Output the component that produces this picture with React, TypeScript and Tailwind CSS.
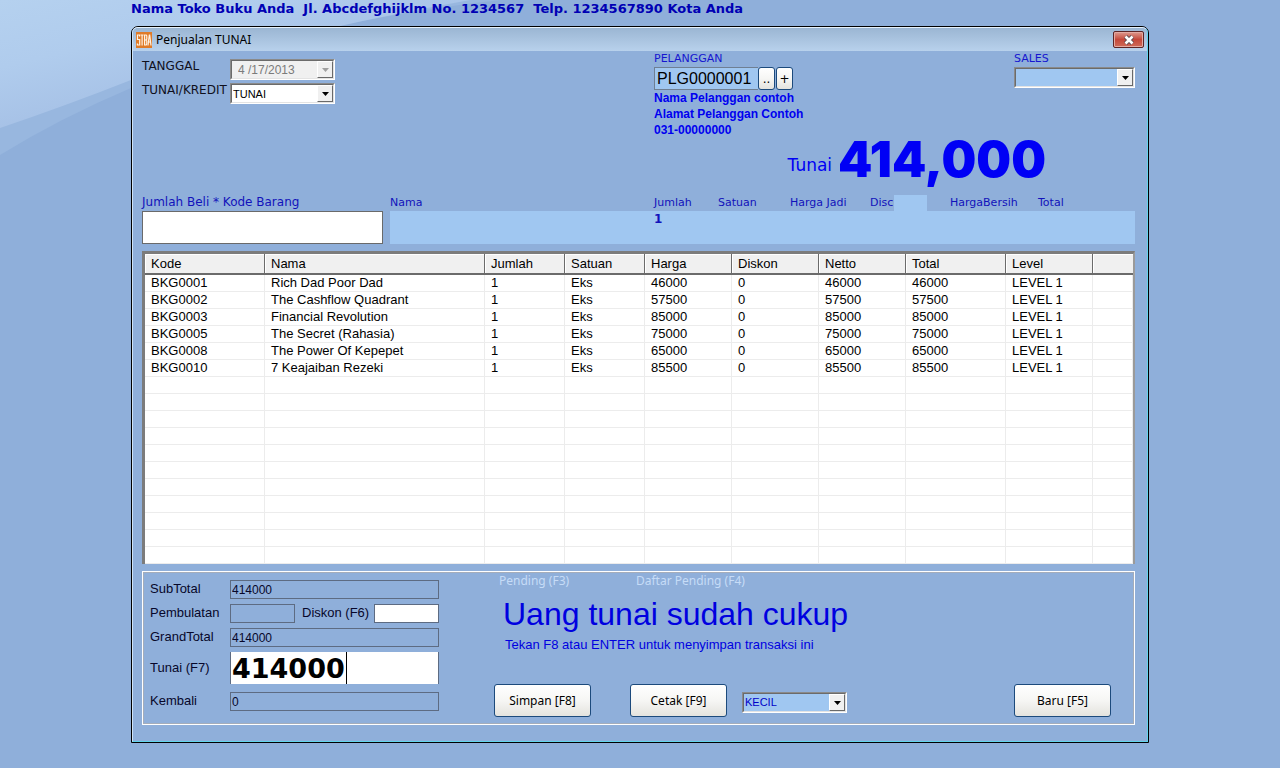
import type { ReactNode } from 'react'

const COLUMNS = [
  { name: 'Kode', width: 'w-[120px]' },
  { name: 'Nama', width: 'w-[220px]' },
  { name: 'Jumlah', width: 'w-20' },
  { name: 'Satuan', width: 'w-20' },
  { name: 'Harga', width: 'w-[87px]' },
  { name: 'Diskon', width: 'w-[87px]' },
  { name: 'Netto', width: 'w-[87px]' },
  { name: 'Total', width: 'w-[100px]' },
  { name: 'Level', width: 'w-[87px]' },
  { name: '', width: '' },
]

const ITEMS = [
  ['BKG0001', 'Rich Dad Poor Dad', '1', 'Eks', '46000', '0', '46000', '46000', 'LEVEL 1'],
  ['BKG0002', 'The Cashflow Quadrant', '1', 'Eks', '57500', '0', '57500', '57500', 'LEVEL 1'],
  ['BKG0003', 'Financial Revolution', '1', 'Eks', '85000', '0', '85000', '85000', 'LEVEL 1'],
  ['BKG0005', 'The Secret (Rahasia)', '1', 'Eks', '75000', '0', '75000', '75000', 'LEVEL 1'],
  ['BKG0008', 'The Power Of Kepepet', '1', 'Eks', '65000', '0', '65000', '65000', 'LEVEL 1'],
  ['BKG0010', '7 Keajaiban Rezeki', '1', 'Eks', '85500', '0', '85500', '85500', 'LEVEL 1'],
]

const VISIBLE_ROWS = 17

function Wallpaper() {
  return (
    <svg className="absolute top-0 left-0 w-[520px] h-[170px]" viewBox="0 0 520 170" aria-hidden="true">
      <defs>
        <linearGradient id="sky" gradientUnits="userSpaceOnUse" x1="0" y1="0" x2="30" y2="128">
          <stop offset="0" stopColor="#b5d1ef" />
          <stop offset="0.5" stopColor="#b0cced" />
          <stop offset="1" stopColor="#a6c1e6" />
        </linearGradient>
      </defs>
      <path d="M0 155 Q60 118 131 88 Q300 22 500 0 L0 0Z" fill="#98b7df" />
      <path d="M0 128 Q65 106 131 80 Q300 30 470 0 L0 0Z" fill="url(#sky)" />
    </svg>
  )
}

function DropBox({ className, disabled, children }: { className: string; disabled?: boolean; children: ReactNode }) {
  return (
    <div className={`relative h-[21px] border border-t-[#8a8a8a] border-l-[#8a8a8a] border-r-white border-b-white ${className}`}>
      <div className="h-full border border-t-[#6b6b6b] border-l-[#6b6b6b] border-r-[#e3e3e3] border-b-[#e3e3e3]">{children}</div>
      <span className="pointer-events-none absolute top-px right-px bottom-px w-4 flex items-center justify-center bg-[#f0f0f0] border border-t-white border-l-white border-r-[#696969] border-b-[#696969]">
        <svg width="7" height="4" viewBox="0 0 7 4" className={disabled ? 'fill-[#a0a0a0]' : 'fill-black'} aria-hidden="true">
          <path d="M0 0h7L3.5 4z" />
        </svg>
      </span>
    </div>
  )
}

function PushButton({ className, children }: { className: string; children: ReactNode }) {
  return (
    <button
      type="button"
      className={`border border-[#1c4a7c] rounded-[3px] bg-linear-to-b from-white via-[#f6f6f4] to-[#e4e3de] text-black ${className}`}
    >
      {children}
    </button>
  )
}

function TitleBar() {
  return (
    <div className="h-[23px] pl-[3px] pr-[3px] flex items-center rounded-t-[5px] bg-linear-to-b from-[#9bb6d3] to-[#b8d1ec]">
      <svg width="16" height="16" viewBox="0 0 16 16" aria-hidden="true">
        <rect width="16" height="16" fill="#e07b28" />
        <g fill="none" stroke="#fff3e4" strokeWidth="1.2">
          <path d="M3.6 4.5V3H1.5v4.5h2.2V13H1.4v-1.6" />
          <path d="M4.6 3h3M6.1 3v10.5" />
          <path d="M8.6 3V13h1.6l.6-1V9l-.8-1 .8-1V4l-.6-1zM8.6 8h1.6" />
          <path d="M12 13.5L13.3 3h.4L15 13.5M12.4 10h2.2" />
        </g>
      </svg>
      <h2 className="ml-1 flex-1 font-['Noto_Sans'] text-xs text-black">Penjualan TUNAI</h2>
      <button
        type="button"
        aria-label="Tutup"
        className="w-[31px] h-[17px] flex items-center justify-center rounded-[2px] border border-[#5c2425] bg-linear-to-b from-[#dc9a90] via-[#c4473a] to-[#cf6a58] shadow-[inset_0_0_0_1px_#e3aaa2]"
      >
        <svg width="12" height="10" viewBox="0 0 12 10" aria-hidden="true">
          <path d="M2.5 1.5l7 7M9.5 1.5l-7 7" stroke="#5a4a50" strokeWidth="4.4" />
          <path d="M2.5 1.5l7 7M9.5 1.5l-7 7" stroke="#fff" strokeWidth="2.6" />
        </svg>
      </button>
    </div>
  )
}

function TransactionHeader() {
  return (
    <div className="flex h-[88px] text-[11px] leading-4">
      <div className="w-[512px] shrink-0 pt-2 text-xs/[14px] text-[#10101c]">
        <div className="flex h-6">
          <label htmlFor="tanggal" className="w-[88px]">TANGGAL</label>
          <DropBox className="w-[105px]" disabled>
            <input
              id="tanggal"
              disabled
              defaultValue="4 /17/2013"
              className="block w-full h-full pl-[6px] bg-[#f0f0f0] font-['Liberation_Sans'] text-xs text-[#7b7b7b]"
            />
          </DropBox>
        </div>
        <div className="flex h-6">
          <label htmlFor="jenis" className="w-[88px]">TUNAI/KREDIT</label>
          <DropBox className="w-[105px]">
            <select id="jenis" className="block w-full h-full pl-px appearance-none bg-white font-['Liberation_Sans'] text-[11px] text-black">
              <option>TUNAI</option>
              <option>KREDIT</option>
            </select>
          </DropBox>
        </div>
      </div>
      <div className="flex-1">
        <label htmlFor="pelanggan" className="block text-[#1616d0]">PELANGGAN</label>
        <div className="flex h-[23px]">
          <input
            id="pelanggan"
            defaultValue="PLG0000001"
            className="w-[104px] pl-[2px] bg-[#a0c7f1] border border-r-0 border-[#6f7f93] font-['Liberation_Sans'] text-base text-black"
          />
          <PushButton className="w-[17px] text-xs">..</PushButton>
          <PushButton className="w-[17px] ml-px text-xs">+</PushButton>
        </div>
        <div className="font-['Liberation_Sans'] font-bold text-xs/4 text-[#0000f0]">
          <p>Nama Pelanggan contoh</p>
          <p>Alamat Pelanggan Contoh</p>
          <p>031-00000000</p>
        </div>
      </div>
      <div className="w-[121px]">
        <label htmlFor="sales" className="block text-[#1616d0]">SALES</label>
        <DropBox className="w-[121px]">
          <select id="sales" className="block w-full h-full appearance-none bg-[#a0c7f1]">
            <option></option>
          </select>
        </DropBox>
      </div>
    </div>
  )
}

function EntryRow() {
  return (
    <div className="text-[11px] leading-4 text-[#1212bb]">
      <div className="flex h-4">
        <label htmlFor="kode" className="w-[248px] text-xs/[14px]">Jumlah Beli * Kode Barang</label>
        <span className="w-[264px]">Nama</span>
        <span className="w-16">Jumlah</span>
        <span className="w-[72px]">Satuan</span>
        <span className="w-20">Harga Jadi</span>
        <span className="w-6 overflow-hidden">Disc</span>
        <span className="w-[33px] mr-[23px] bg-[#a0c7f1]" />
        <span className="w-[88px]">HargaBersih</span>
        <span>Total</span>
      </div>
      <div className="flex h-[33px]">
        <input id="kode" className="w-[241px] mr-[7px] px-1 bg-white border border-[#6a6a6a]" />
        <div className="flex-1 pl-[264px] bg-[#a0c7f1] font-bold text-xs/4">1</div>
      </div>
    </div>
  )
}

function ItemTable() {
  return (
    <div className="mt-[7px] bg-white border-t-[3px] border-l-[3px] border-r-2 border-t-[#7c7c7c] border-l-[#7c7c7c] border-r-[#9a9a9a]">
      <table className="w-full table-fixed border-separate border-spacing-0 font-['Liberation_Sans'] text-[13px] text-black">
        <thead>
          <tr>
            {COLUMNS.map(c => (
              <th
                key={c.name}
                className={`${c.width} h-[21px] p-0 pl-[6px] pt-px text-left font-normal leading-[18px] bg-[#f0f0f0] shadow-[inset_1px_1px_0_#fff] border-b-2 border-b-[#6b6b6b] border-r border-r-[#6b6b6b] last:border-r-0`}
              >
                {c.name}
              </th>
            ))}
          </tr>
        </thead>
        <tbody>
          {Array.from({ length: VISIBLE_ROWS }, (_, r) => (
            <tr key={r}>
              {COLUMNS.map((c, i) => (
                <td key={c.name} className="h-[17px] p-0 pl-[6px] leading-4 border-b border-r border-[#ececec]">
                  {ITEMS[r]?.[i]}
                </td>
              ))}
            </tr>
          ))}
        </tbody>
      </table>
    </div>
  )
}

function PaymentForm() {
  const field = 'h-[19px] px-px border border-[#5d6b82] text-xs'
  return (
    <div className="w-[344px] shrink-0 font-['Liberation_Sans'] text-[13px] text-[#07072a]">
      <div className="flex h-6">
        <label htmlFor="subtotal" className="w-20 leading-[18px]">SubTotal</label>
        <input id="subtotal" readOnly defaultValue="414000" className={`w-[209px] ${field}`} />
      </div>
      <div className="flex h-6">
        <label htmlFor="pembulatan" className="w-20 leading-[18px]">Pembulatan</label>
        <input id="pembulatan" readOnly className={`w-[65px] ${field}`} />
        <label htmlFor="diskon" className="w-[72px] ml-[7px] leading-[18px]">Diskon (F6)</label>
        <input id="diskon" className={`w-[65px] bg-white ${field}`} />
      </div>
      <div className="flex h-6">
        <label htmlFor="grandtotal" className="w-20 leading-[18px]">GrandTotal</label>
        <input id="grandtotal" readOnly defaultValue="414000" className={`w-[209px] ${field}`} />
      </div>
      <div className="relative flex h-10">
        <label htmlFor="tunai" className="w-20 leading-8">Tunai (F7)</label>
        <input
          id="tunai"
          defaultValue="414000"
          className="w-[209px] h-8 px-px pt-[2px] bg-white border-x border-[#5d6b82] font-['DejaVu_Sans'] font-bold text-[27px] text-black"
        />
        <span className="absolute left-[196px] top-0 w-px h-8 bg-black" />
      </div>
      <div className="flex h-6">
        <label htmlFor="kembali" className="w-20 leading-[18px]">Kembali</label>
        <input id="kembali" readOnly defaultValue="0" className={`w-[209px] ${field}`} />
      </div>
    </div>
  )
}

function PaymentPanel() {
  return (
    <div className="mt-[7px] h-[154px] border border-white outline -outline-offset-2 outline-[#a5adba] flex pl-[7px] pt-2">
      <PaymentForm />
      <div className="flex-1 flex flex-col">
        <div className="-mt-2 flex h-[18px] leading-[18px] pl-[5px] font-['Noto_Sans'] text-xs text-[#c6dcf7]">
          <span className="w-[137px]">Pending (F3)</span>
          <span>Daftar Pending (F4)</span>
        </div>
        <div className="font-['Liberation_Sans'] text-[#0000e0] pl-[9px]">
          <p className="text-[32px] leading-[48px]">Uang tunai sudah cukup</p>
          <p className="text-[13px] leading-[14px] pl-[2px]">Tekan F8 atau ENTER untuk menyimpan transaksi ini</p>
        </div>
        <div className="mt-8 flex pr-[23px] font-['Noto_Sans'] text-xs">
          <PushButton className="w-[97px] h-[33px]">Simpan [F8]</PushButton>
          <PushButton className="w-[97px] h-[33px] ml-[39px]">Cetak [F9]</PushButton>
          <DropBox className="w-[105px] ml-[15px] mt-2">
            <select
              aria-label="Ukuran nota"
              className="block w-full h-full pl-px appearance-none bg-[#a0c7f1] font-['Liberation_Sans'] text-[11px] text-[#0000c8]"
            >
              <option>KECIL</option>
              <option>BESAR</option>
            </select>
          </DropBox>
          <PushButton className="w-[97px] h-[33px] ml-auto">Baru [F5]</PushButton>
        </div>
      </div>
    </div>
  )
}

export default function App() {
  return (
    <div className="relative min-h-screen overflow-hidden bg-[#8fafda] font-['DejaVu_Sans',sans-serif]">
      <Wallpaper />
      <main className="relative mx-[131px]">
        <h1 className="h-[26px] leading-[18px] whitespace-pre font-bold text-[13px] text-[#0000b4]">
          {'Nama Toko Buku Anda  Jl. Abcdefghijklm No. 1234567  Telp. 1234567890 Kota Anda'}
        </h1>
        <section className="rounded-t-[7px] border border-black">
          <div className="rounded-t-md border border-t-[#e6f2fc] border-l-[#cfe3f7] border-r-[#62d4ec] border-b-[#62d4ec] bg-[#8fafda]">
            <TitleBar />
            <div className="pl-[9px] pr-3 pb-4">
              <TransactionHeader />
              <div className="flex h-14 justify-end items-start pr-[89px] text-[#0000f5]">
                <span className="mr-[6px] text-[17px] leading-[52px]">Tunai</span>
                <span className="font-['Inter'] font-black text-[49px] leading-[42px]">414,000</span>
              </div>
              <EntryRow />
              <ItemTable />
              <PaymentPanel />
            </div>
          </div>
        </section>
      </main>
    </div>
  )
}
